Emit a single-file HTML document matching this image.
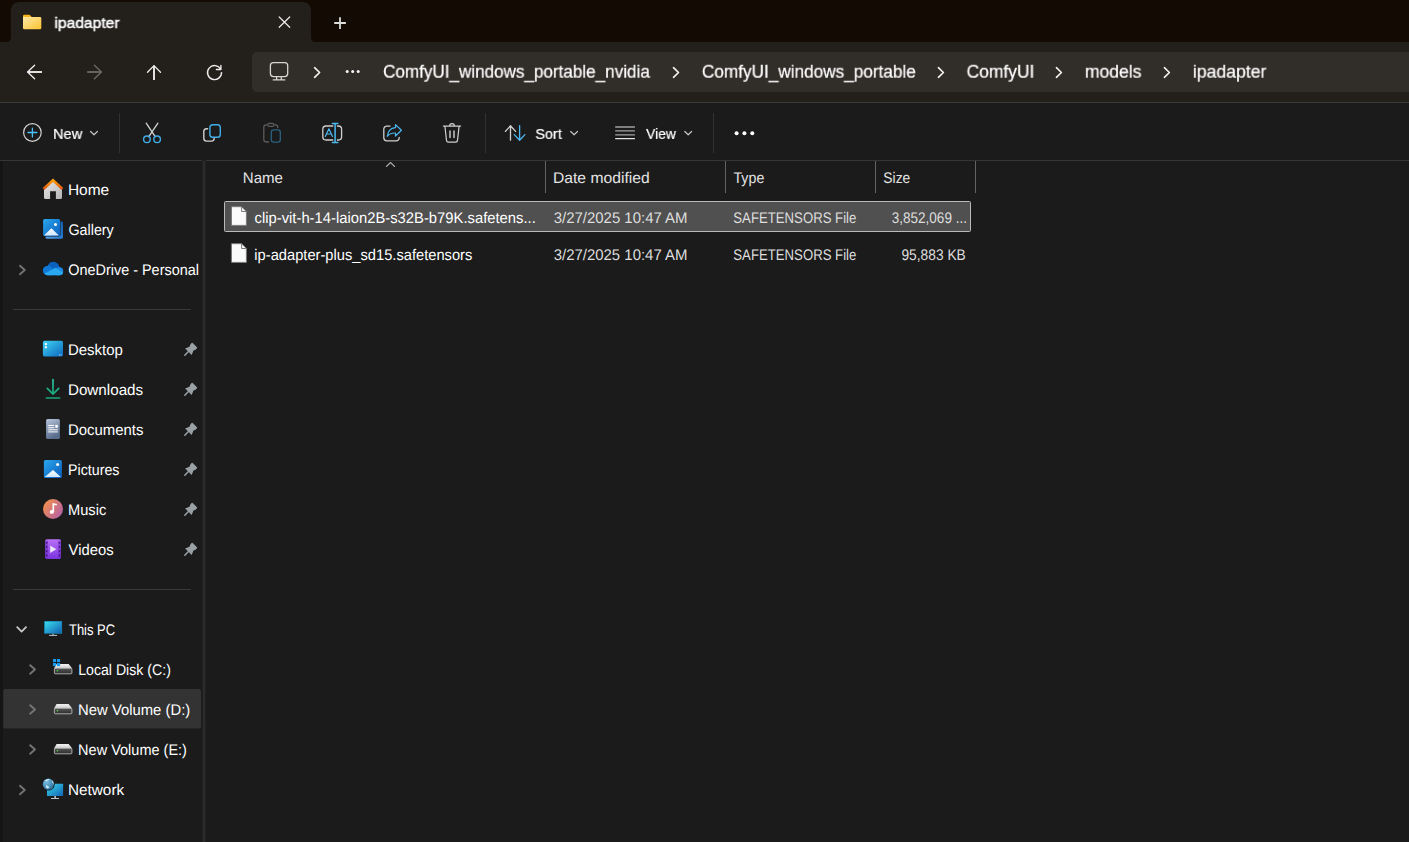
<!DOCTYPE html>
<html>
<head>
<meta charset="utf-8">
<title>ipadapter</title>
<style>
*{box-sizing:border-box;margin:0;padding:0}
html,body{width:1409px;height:842px;overflow:hidden;background:#1b1b1b}
body{position:relative;font-family:"Liberation Sans",sans-serif;color:#fff}
.abs{position:absolute}
.t{position:absolute;white-space:nowrap;line-height:1;transform-origin:0 0}
svg{position:absolute;overflow:visible}
#titlebar{left:0;top:0;width:1409px;height:42px;background:#120a03}
#navbar{left:0;top:42px;width:1409px;height:60px;background:#23201c}
#addr{left:252px;top:52px;width:1170px;height:40px;background:#312d29;border-radius:5px}
#navline{left:0;top:102px;width:1409px;height:1px;background:#3a3938}
#toolbar{left:0;top:103px;width:1409px;height:57px;background:#1b1b1b}
#toolline{left:0;top:160px;width:1409px;height:1px;background:#363636}
#leftedge{left:0;top:161px;width:3px;height:681px;background:#151515}
#sideline{left:203px;top:161px;width:2px;height:681px;background:#2b2b2b;box-shadow:0 0 0 1px #202020}
.vsep{position:absolute;width:1px;background:#313131;top:113px;height:40px}
.csep{position:absolute;width:1px;background:#636363;top:161px;height:32px}
.hsep{position:absolute;height:1px;background:#3a3a3a;left:13px;width:178px}
#selrow{left:224px;top:201px;width:747px;height:31px;background:#505050;border:1px solid #bababa;border-radius:1.5px}
#sidesel{left:4px;top:690px;width:197px;height:38px;background:#323232;border-radius:3px}
</style>
</head>
<body>
<div id="titlebar" class="abs"></div>
<div id="navbar" class="abs"></div>
<svg id="tabshape" style="left:0;top:0" width="330" height="42" viewBox="0 0 330 42"><path d="M0 42 H6.400 C8.900 42 10.900 40 10.900 37.500 V10 C10.900 5.600 14.500 2 18.900 2 H303 C307.400 2 311 5.600 311 10 V37.500 C311 40 313 42 315.500 42 H330 Z" fill="#23201c"/></svg>
<div id="addr" class="abs"></div>
<div id="navline" class="abs"></div>
<div id="toolbar" class="abs"></div>
<div id="toolline" class="abs"></div>
<div id="leftedge" class="abs"></div>
<div id="sideline" class="abs"></div>
<div class="vsep" style="left:119px"></div>
<div class="vsep" style="left:485px"></div>
<div class="vsep" style="left:713px"></div>
<div class="csep" style="left:545px"></div>
<div class="csep" style="left:725px"></div>
<div class="csep" style="left:875px"></div>
<div class="csep" style="left:975px"></div>
<div class="hsep" style="top:309px"></div>
<div class="hsep" style="top:589px"></div>
<div id="selrow" class="abs"></div>
<svg style="left:0;top:680px" width="205" height="60" viewBox="0 680 205 60"><rect x="3.200" y="689.100" width="197.800" height="39.500" rx="2" fill="#333333"/></svg>
<!-- ===== title bar icons ===== -->
<svg style="left:0;top:0" width="1409" height="160" viewBox="0 0 1409 160" fill="none" stroke-linecap="round" stroke-linejoin="round">
<defs>
<linearGradient id="fold1" x1="0" y1="0" x2="1" y2="1"><stop offset="0" stop-color="#ffe9a6"/><stop offset="1" stop-color="#fcc230"/></linearGradient>
</defs>
<!-- folder in tab -->
<path d="M23 16.200 a1.400 1.400 0 0 1 1.400 -1.400 h5.200 l2.400 2.400 h-9 z" fill="#f7b51c"/>
<path d="M23 17 h17 a1.300 1.300 0 0 1 1.300 1.300 v9.700 a1.300 1.300 0 0 1 -1.300 1.300 h-15.700 a1.300 1.300 0 0 1 -1.300 -1.300 z" fill="url(#fold1)"/>
<!-- tab close -->
<path d="M279.200 17 L289.700 27.300 M289.700 17 L279.200 27.300" stroke="#ececec" stroke-width="1.200"/>
<!-- new tab plus -->
<path d="M334.200 23 H345.900 M340 17.200 V28.900" stroke="#dcdcdc" stroke-width="1.800" stroke-linecap="butt"/>
<!-- back -->
<path d="M27.600 72 H42" stroke="#e2e2e2" stroke-width="2" stroke-linecap="butt"/>
<path d="M34.600 65.200 L27.600 72 L34.600 78.800" stroke="#f0f0f0" stroke-width="1.300"/>
<!-- forward (disabled) -->
<path d="M87.200 72 H101.400" stroke="#66635f" stroke-width="2" stroke-linecap="butt"/>
<path d="M94.400 65.200 L101.400 72 L94.400 78.800" stroke="#6e6b67" stroke-width="1.300"/>
<!-- up -->
<path d="M154 65.800 V80" stroke="#e2e2e2" stroke-width="2" stroke-linecap="butt"/>
<path d="M147.500 72.300 L154 65.600 L160.500 72.300" stroke="#f0f0f0" stroke-width="1.300"/>
<!-- refresh -->
<path d="M221.500 72.100 A7 7 0 1 1 220.700 69.300" stroke="#ececec" stroke-width="1.400" stroke-linecap="butt"/>
<path d="M220.900 65.400 V69.500 H216.400" stroke="#ececec" stroke-width="1.400"/>
<!-- monitor -->
<rect x="270.400" y="62.600" width="17.300" height="14" rx="3" stroke="#d8d5d2" stroke-width="1.300"/>
<path d="M276.600 77 V79.800 M281.300 77 V79.800 M273.200 79.900 H284.800" stroke="#d8d5d2" stroke-width="1.300"/>
<!-- breadcrumb chevrons -->
<g stroke="#f4f4f4" stroke-width="1.650">
<path d="M314.600 67.700 L319.600 72.500 L314.600 77.300"/>
<path d="M673.500 67.700 L678.500 72.500 L673.500 77.300"/>
<path d="M938.400 67.700 L943.400 72.500 L938.400 77.300"/>
<path d="M1056.400 67.700 L1061.400 72.500 L1056.400 77.300"/>
<path d="M1164.400 67.700 L1169.400 72.500 L1164.400 77.300"/>
</g>
<!-- breadcrumb dots -->
<g fill="#f6f6f6"><circle cx="347.200" cy="71.500" r="1.500"/><circle cx="352.700" cy="71.500" r="1.500"/><circle cx="358.200" cy="71.500" r="1.500"/></g>
<!-- ===== toolbar icons ===== -->
<!-- new -->
<circle cx="32.400" cy="132.500" r="8.800" stroke="#d2d2d2" stroke-width="1.200"/>
<path d="M28 132.500 H36.800 M32.400 128.100 V136.900" stroke="#4cc2ff" stroke-width="1.300"/>
<!-- dropdown chevrons -->
<g stroke="#c4c4c4" stroke-width="1.200">
<path d="M90.600 131.500 L94 134.800 L97.400 131.500"/>
<path d="M570.700 131.500 L574.100 134.800 L577.500 131.500"/>
<path d="M684.800 131.500 L688.200 134.800 L691.600 131.500"/>
</g>
<!-- cut -->
<path d="M146.200 123.200 L155.200 136.600 M157.900 123.200 L148.800 136.600" stroke="#d4d4d4" stroke-width="1.300"/>
<circle cx="146.900" cy="139.300" r="3.300" stroke="#41aee8" stroke-width="1.400"/>
<circle cx="157.100" cy="139.300" r="3.300" stroke="#41aee8" stroke-width="1.400"/>
<!-- copy -->
<path d="M207.600 128.800 H206.600 a2.800 2.800 0 0 0 -2.800 2.800 V138.300 a2.800 2.800 0 0 0 2.800 2.800 H211.400 a2.800 2.800 0 0 0 2.800 -2.600" stroke="#cfcfcf" stroke-width="1.400"/>
<rect x="209.900" y="124.800" width="10.400" height="12.500" rx="2.800" stroke="#41aee8" stroke-width="1.400"/>
<!-- paste (disabled) -->
<path d="M267.200 124.800 H266.200 a2.400 2.400 0 0 0 -2.400 2.400 V139.600 a2.400 2.400 0 0 0 2.400 2.400 H268.600 M274.400 124.800 H275.400 a2.400 2.400 0 0 1 2.400 2.400 V127.600" stroke="#5c5c5c" stroke-width="1.300"/>
<rect x="267.700" y="123.400" width="6.300" height="2.900" rx="1.450" stroke="#5c5c5c" stroke-width="1.200"/>
<rect x="271.300" y="129.800" width="9" height="12.400" rx="2.400" stroke="#29617f" stroke-width="1.300"/>
<!-- rename -->
<path d="M332.800 126 H326 a3.200 3.200 0 0 0 -3.200 3.200 V136.800 a3.200 3.200 0 0 0 3.200 3.200 H332.800 M337.400 126 H338.400 a3.200 3.200 0 0 1 3.200 3.200 V136.800 a3.200 3.200 0 0 1 -3.200 3.200 H337.400" stroke="#d0d0d0" stroke-width="1.300"/>
<path d="M332.400 123.500 H337.800 M332.400 142.400 H337.800 M335.100 123.500 V142.400" stroke="#4cb8f0" stroke-width="1.500"/>
<path d="M325.300 136.400 L328.900 128.800 L332.500 136.400 M326.600 134 H331.200" stroke="#4cb8f0" stroke-width="1.200"/>
<!-- share -->
<path d="M390 126.100 H386.800 a3 3 0 0 0 -3 3 V137.800 a3 3 0 0 0 3 3 H396.200 a3 3 0 0 0 3 -3 V137.300" stroke="#cfcfcf" stroke-width="1.300"/>
<path d="M395.500 124.600 L401.400 130.300 L395.500 136 V133 C391.500 132.800 389 134 387.300 136.300 C387.800 131.800 390.500 128.200 395.500 127.700 Z" stroke="#4cb8f0" stroke-width="1.200"/>
<!-- delete -->
<path d="M443.400 126.100 H460.600 M449.600 126 a2.400 2.400 0 0 1 4.800 0" stroke="#d0d0d0" stroke-width="1.200"/>
<path d="M444.900 126.300 L446.500 140.400 a1.900 1.900 0 0 0 1.900 1.700 H455.600 a1.900 1.900 0 0 0 1.900 -1.700 L459.100 126.300" stroke="#d0d0d0" stroke-width="1.200"/>
<path d="M450 131 V137.600 M454 131 V137.600" stroke="#c6c6c6" stroke-width="1.500"/>
<!-- sort -->
<path d="M510.500 125.800 V140.200 M505.400 131.400 L510.500 125.800 L515.600 131.400" stroke="#d2d2d2" stroke-width="1.300"/>
<path d="M519.600 125.600 V140.200 M514.300 134.600 L519.600 140.300 L524.900 134.600" stroke="#4cb8f0" stroke-width="1.300"/>
<!-- view -->
<path d="M615.200 127 H634.900 M615.200 138.700 H634.900" stroke="#e4e4e4" stroke-width="1.200" stroke-linecap="butt"/>
<path d="M615.200 130.900 H634.900 M615.200 134.800 H634.900" stroke="#a2a2a2" stroke-width="1.300" stroke-linecap="butt"/>
<!-- more -->
<g fill="#ffffff"><circle cx="736.600" cy="133.200" r="2"/><circle cx="744.400" cy="133.200" r="2"/><circle cx="752.300" cy="133.200" r="2"/></g>
</svg>
<!-- ===== sidebar icons ===== -->
<svg style="left:0;top:160px" width="205" height="682" viewBox="0 160 205 682" fill="none" stroke-linecap="round" stroke-linejoin="round">
<defs>
<linearGradient id="gRoof" x1="0" y1="0" x2="0" y2="1"><stop offset="0" stop-color="#ffa10d"/><stop offset="1" stop-color="#e0560c"/></linearGradient>
<linearGradient id="gHouse" x1="0" y1="0" x2="1" y2="1"><stop offset="0" stop-color="#e8e8e8"/><stop offset="1" stop-color="#b4b4b4"/></linearGradient>
<linearGradient id="gPic" x1="0" y1="0" x2="1" y2="1"><stop offset="0" stop-color="#2aa7ee"/><stop offset="1" stop-color="#0b5cba"/></linearGradient>
<linearGradient id="gBack" x1="1" y1="0" x2="0" y2="1"><stop offset="0" stop-color="#1265bf"/><stop offset="0.550" stop-color="#2a80d6"/><stop offset="1" stop-color="#5aa6ec"/></linearGradient>
<linearGradient id="gMnt" x1="0" y1="0" x2="0" y2="1"><stop offset="0" stop-color="#ffffff"/><stop offset="1" stop-color="#cfe6fb"/></linearGradient>
<linearGradient id="gDesk" x1="0" y1="0" x2="1" y2="1"><stop offset="0" stop-color="#40d4f2"/><stop offset="1" stop-color="#0d68c0"/></linearGradient>
<linearGradient id="gDl" x1="0" y1="0" x2="0" y2="1"><stop offset="0" stop-color="#28c4a4"/><stop offset="1" stop-color="#1aa67a"/></linearGradient>
<linearGradient id="gDoc" x1="0" y1="0" x2="0.400" y2="1"><stop offset="0" stop-color="#b8c6dc"/><stop offset="1" stop-color="#586c8c"/></linearGradient>
<linearGradient id="gMus" x1="0" y1="0.200" x2="1" y2="0.900"><stop offset="0" stop-color="#f4914a"/><stop offset="1" stop-color="#b05cae"/></linearGradient>
<linearGradient id="gVid" x1="0" y1="0" x2="0" y2="1"><stop offset="0" stop-color="#b870f6"/><stop offset="1" stop-color="#7c34de"/></linearGradient>
<linearGradient id="gPC" x1="0" y1="0" x2="1" y2="1"><stop offset="0" stop-color="#38dcec"/><stop offset="1" stop-color="#1262b4"/></linearGradient>
<linearGradient id="gDrv" x1="0" y1="0" x2="0" y2="1"><stop offset="0" stop-color="#565656"/><stop offset="1" stop-color="#2c2c2c"/></linearGradient>
<linearGradient id="gDrvTop" x1="0" y1="0" x2="0" y2="1"><stop offset="0" stop-color="#f2f2f2"/><stop offset="1" stop-color="#d0d0d0"/></linearGradient>
<radialGradient id="gGlobe" cx="0.350" cy="0.300" r="0.800"><stop offset="0" stop-color="#7cc0e2"/><stop offset="1" stop-color="#236a98"/></radialGradient>
<g id="pin">
<path d="M190.300 344.500 L191.300 343.300 a1.200 1.200 0 0 1 1.700 -0.100 L196.700 346.900 a1.200 1.200 0 0 1 0 1.700 L195.600 349.700 L193.500 350.600 L191.700 354.900 L185.100 348.400 L189.500 346.700 Z" fill="#99a0a5"/>
<path d="M188.200 351.800 L184.800 355.200" stroke="#99a0a5" stroke-width="1.500"/>
</g>
<g id="drive">
<path d="M56.600 704 H68.600 L72.100 708.200 H54.100 Z" fill="url(#gDrvTop)"/>
<rect x="54.400" y="708.300" width="17.500" height="5.500" rx="0.800" fill="url(#gDrv)" stroke="#b9b9b9" stroke-width="0.900"/>
<circle cx="57.400" cy="710.800" r="0.800" fill="#43e043"/>
</g>
</defs>
<!-- home -->
<path d="M44 189 L53 181.200 L62 189 V197.600 a1.500 1.500 0 0 1 -1.500 1.500 H55.900 V191.300 H50.100 V199.100 H45.500 a1.500 1.500 0 0 1 -1.500 -1.500 Z" fill="url(#gHouse)"/>
<path d="M43.500 189 L53 180.300 L62.500 189" stroke="url(#gRoof)" stroke-width="2.500" stroke-linecap="butt" stroke-linejoin="miter"/>
<!-- gallery -->
<rect x="45.600" y="221.600" width="17.300" height="17.200" rx="1.600" fill="url(#gBack)"/>
<rect x="42.700" y="218.700" width="17.900" height="17.900" rx="1.800" fill="#1b1b1b"/>
<rect x="43.100" y="219.100" width="17" height="17" rx="1.500" fill="url(#gPic)"/>
<path d="M43.900 235.400 L51.400 228.200 L58.900 235.400 Z" fill="url(#gMnt)"/>
<circle cx="55.500" cy="224.500" r="1.500" fill="#fff"/>
<!-- onedrive -->
<clipPath id="cloudclip"><circle cx="47.500" cy="270.600" r="4.600"/><circle cx="53.400" cy="267.600" r="5.900"/><circle cx="59.200" cy="271.200" r="4"/><rect x="47.500" y="270" width="11.700" height="5.200"/></clipPath>
<g clip-path="url(#cloudclip)">
<rect x="42" y="260" width="22" height="16" fill="#0a62be"/>
<circle cx="46.800" cy="271.200" r="6.300" fill="#0f79d8"/>
<circle cx="59.600" cy="271.700" r="4.800" fill="#1a8ae2"/>
<path d="M42 275 L55.200 267.700 L64 273 V277 H42 Z" fill="#2ba7f0"/>
</g>
<!-- desktop -->
<rect x="42.900" y="340.800" width="20.100" height="15.600" rx="1.600" fill="url(#gDesk)"/>
<rect x="44.900" y="343.100" width="2" height="2" fill="#fff"/><rect x="44.900" y="346.200" width="2" height="2" fill="#fff"/>
<rect x="58.800" y="354.500" width="1" height="1" fill="#cfeaff"/><rect x="60.600" y="354.500" width="1" height="1" fill="#cfeaff"/>
<!-- downloads -->
<path d="M53 379.600 V394 M47.300 388.400 L53 394.200 L58.700 388.400" stroke="url(#gDl)" stroke-width="1.700"/>
<path d="M46.400 398 H59.600" stroke="#1aa87c" stroke-width="1.700"/>
<!-- documents -->
<rect x="46.100" y="419.100" width="13.800" height="19.800" rx="1.500" fill="url(#gDoc)"/>
<path d="M48.300 425.500 H54.200 M48.300 427.700 H54.200 M48.300 429.800 H57.800 M48.300 431.900 H57.800" stroke="#fff" stroke-width="1" stroke-linecap="butt"/>
<rect x="55.300" y="424.900" width="2.500" height="2.900" fill="#fff"/>
<!-- pictures -->
<rect x="43.900" y="460" width="18" height="18" rx="1.600" fill="url(#gPic)"/>
<path d="M44.700 477 L53 470 L60.900 477 Z" fill="url(#gMnt)"/>
<circle cx="57.600" cy="464.500" r="1.500" fill="#fff"/>
<!-- music -->
<circle cx="53" cy="509" r="10" fill="url(#gMus)"/>
<ellipse cx="51.800" cy="511.900" rx="2.100" ry="1.900" fill="#fff"/>
<path d="M53.300 512 V504 L56.800 504.800" stroke="#fff" stroke-width="1.600" stroke-linecap="butt" stroke-linejoin="miter"/>
<!-- videos -->
<rect x="45.200" y="539.200" width="15.700" height="19.700" rx="1.600" fill="url(#gVid)"/>
<rect x="45.200" y="540.600" width="2.800" height="17" fill="#6c2ac2" opacity="0.550"/><rect x="58.100" y="540.600" width="2.800" height="17" fill="#6c2ac2" opacity="0.550"/>
<g fill="#3c1680"><rect x="45.900" y="542" width="1.400" height="1.600"/><rect x="45.900" y="546.200" width="1.400" height="1.600"/><rect x="45.900" y="550.400" width="1.400" height="1.600"/><rect x="45.900" y="554.600" width="1.400" height="1.600"/><rect x="58.800" y="542" width="1.400" height="1.600"/><rect x="58.800" y="546.200" width="1.400" height="1.600"/><rect x="58.800" y="550.400" width="1.400" height="1.600"/><rect x="58.800" y="554.600" width="1.400" height="1.600"/></g>
<path d="M50.200 545.500 V553 L56.300 549.200 Z" fill="#ece2fb"/>
<!-- this pc -->
<rect x="44.100" y="621" width="18" height="12.800" rx="0.600" fill="#1880b0"/>
<rect x="44.900" y="621.700" width="16.400" height="11.300" fill="url(#gPC)"/>
<rect x="52.400" y="633.800" width="1.400" height="1.400" fill="#9fb0bc"/><rect x="49.100" y="634.900" width="8" height="1" fill="#b8c4cc"/>
<!-- local disk c -->
<use href="#drive" y="-40"/>
<g fill="#1b9af2"><rect x="53" y="659" width="3.100" height="3.100"/><rect x="57" y="659" width="3.100" height="3.100"/><rect x="53" y="663" width="3.100" height="3.100"/><rect x="57" y="663" width="3.100" height="3.100"/></g>
<use href="#drive" y="0"/>
<use href="#drive" y="40"/>
<!-- network -->
<rect x="47" y="783.800" width="16.100" height="12.100" rx="0.500" fill="url(#gPC)"/>
<rect x="54.300" y="795.900" width="1.700" height="2.200" fill="#aab4bc"/><rect x="51" y="798" width="8" height="1" fill="#bcc4ca"/>
<circle cx="48.400" cy="784.200" r="6.300" fill="#1b1b1b"/>
<circle cx="48.400" cy="784.200" r="5.600" fill="url(#gGlobe)"/>
<path d="M44.500 781 C45.500 779.500 48 778.700 50 779 C49 780.200 46.500 781.500 44.500 781 Z M46 785 L49.500 787 L47.800 788.800 L45.800 787.200 Z M51.800 780.200 C53.200 781 53.800 782.600 53.600 784 C52.600 783.400 52 781.600 51.800 780.200 Z" fill="#d8eef8" opacity="0.900"/>
<!-- pins -->
<use href="#pin" y="0"/><use href="#pin" y="40"/><use href="#pin" y="80"/><use href="#pin" y="120"/><use href="#pin" y="160"/><use href="#pin" y="200"/>
<!-- chevrons -->
<g stroke="#747474" stroke-width="1.900" stroke-linecap="butt">
<path d="M19.400 265.300 L24.800 270 L19.400 274.700"/>
<path d="M29.600 664.800 L35 669.500 L29.600 674.200"/>
<path d="M29.600 704.800 L35 709.500 L29.600 714.200"/>
<path d="M29.600 744.800 L35 749.500 L29.600 754.200"/>
<path d="M19.400 785.300 L24.800 790 L19.400 794.700"/>
</g>
<path d="M16.700 626.600 L21.600 631.700 L26.500 626.600" stroke="#c8c8c8" stroke-width="1.700" stroke-linecap="butt"/>
</svg>
<!-- ===== content icons ===== -->
<svg style="left:205px;top:160px" width="800" height="120" viewBox="205 160 800 120" fill="none" stroke-linecap="round" stroke-linejoin="round">
<defs>
<g id="fileico">
<path d="M231.800 206.700 H241.600 L246.400 211.500 V225.400 H231.800 Z" fill="#fafafa" stroke="#7a7a7a" stroke-width="1"/>
<path d="M241.600 206.700 V211.500 H246.400" fill="none" stroke="#7a7a7a" stroke-width="1"/>
</g>
</defs>
<use href="#fileico" y="0"/>
<use href="#fileico" y="37"/>
<path d="M386.400 166.500 L390.500 162.500 L394.600 166.500" stroke="#ababab" stroke-width="1.100"/>
</svg>

<div class="t" style="left:54px;top:14px;font-size:15.4px;color:#ffffff;-webkit-text-stroke:0.45px currentColor;will-change:transform;transform:translate(0.39px,0.96px) scaleX(1.0173) skewX(0.05deg);">ipadapter</div>
<div class="t" style="left:383px;top:62px;font-size:18.0px;color:#ffffff;will-change:transform;-webkit-text-stroke:0.22px currentColor;transform:translate(0.09px,0.76px) scaleX(0.9487) skewX(0.05deg);">ComfyUI_windows_portable_nvidia</div>
<div class="t" style="left:701px;top:62px;font-size:18.0px;color:#ffffff;will-change:transform;-webkit-text-stroke:0.22px currentColor;transform:translate(0.93px,0.76px) scaleX(0.9549) skewX(0.05deg);">ComfyUI_windows_portable</div>
<div class="t" style="left:966px;top:62px;font-size:18.0px;color:#ffffff;will-change:transform;-webkit-text-stroke:0.22px currentColor;transform:translate(0.62px,0.76px) scaleX(0.9677) skewX(0.05deg);">ComfyUI</div>
<div class="t" style="left:1084px;top:62px;font-size:18.0px;color:#ffffff;will-change:transform;-webkit-text-stroke:0.22px currentColor;transform:translate(0.88px,0.76px) scaleX(0.9752) skewX(0.05deg);">models</div>
<div class="t" style="left:1192px;top:62px;font-size:18.0px;color:#ffffff;will-change:transform;-webkit-text-stroke:0.22px currentColor;transform:translate(0.87px,0.76px) scaleX(0.9804) skewX(0.05deg);">ipadapter</div>
<div class="t" style="left:53px;top:125px;font-size:15.4px;color:#ffffff;will-change:transform;-webkit-text-stroke:0.22px currentColor;transform:translate(0.05px,0.96px) scaleX(0.9484) skewX(0.05deg);">New</div>
<div class="t" style="left:535px;top:125px;font-size:15.4px;color:#ffffff;will-change:transform;-webkit-text-stroke:0.22px currentColor;transform:translate(0.39px,0.96px) scaleX(0.9352) skewX(0.05deg);">Sort</div>
<div class="t" style="left:646px;top:125px;font-size:15.4px;color:#ffffff;will-change:transform;-webkit-text-stroke:0.22px currentColor;transform:translate(0.14px,0.96px) scaleX(0.8955) skewX(0.05deg);">View</div>
<div class="t" style="left:67px;top:181px;font-size:15.4px;color:#ffffff;transform:translate(0.89px,0.96px) scaleX(1.0064) skewX(0.05deg);">Home</div>
<div class="t" style="left:68px;top:221px;font-size:15.4px;color:#ffffff;transform:translate(0.45px,0.96px) scaleX(0.9292) skewX(0.05deg);">Gallery</div>
<div class="t" style="left:68px;top:261px;font-size:15.4px;color:#ffffff;transform:translate(0.24px,0.96px) scaleX(0.9372) skewX(0.05deg);">OneDrive - Personal</div>
<div class="t" style="left:67px;top:341px;font-size:15.4px;color:#ffffff;transform:translate(0.93px,0.96px) scaleX(0.9744) skewX(0.05deg);">Desktop</div>
<div class="t" style="left:67px;top:381px;font-size:15.4px;color:#ffffff;transform:translate(0.91px,0.96px) scaleX(0.9879) skewX(0.05deg);">Downloads</div>
<div class="t" style="left:67px;top:421px;font-size:15.4px;color:#ffffff;transform:translate(0.94px,0.96px) scaleX(0.9685) skewX(0.05deg);">Documents</div>
<div class="t" style="left:67px;top:461px;font-size:15.4px;color:#ffffff;transform:translate(0.99px,0.96px) scaleX(0.9250) skewX(0.05deg);">Pictures</div>
<div class="t" style="left:67px;top:501px;font-size:15.4px;color:#ffffff;transform:translate(0.95px,0.96px) scaleX(0.9523) skewX(0.05deg);">Music</div>
<div class="t" style="left:68px;top:541px;font-size:15.4px;color:#ffffff;transform:translate(0.50px,0.96px) scaleX(0.9633) skewX(0.05deg);">Videos</div>
<div class="t" style="left:68px;top:621px;font-size:15.4px;color:#ffffff;transform:translate(0.96px,0.96px) scaleX(0.8438) skewX(0.05deg);">This PC</div>
<div class="t" style="left:78px;top:661px;font-size:15.4px;color:#ffffff;transform:translate(0.14px,0.96px) scaleX(0.9187) skewX(0.05deg);">Local Disk (C:)</div>
<div class="t" style="left:78px;top:701px;font-size:15.4px;color:#ffffff;transform:translate(0.09px,0.96px) scaleX(0.9637) skewX(0.05deg);">New Volume (D:)</div>
<div class="t" style="left:78px;top:741px;font-size:15.4px;color:#ffffff;transform:translate(0.11px,0.96px) scaleX(0.9423) skewX(0.05deg);">New Volume (E:)</div>
<div class="t" style="left:67px;top:781px;font-size:15.4px;color:#ffffff;transform:translate(0.90px,0.96px) scaleX(0.9964) skewX(0.05deg);">Network</div>
<div class="t" style="left:242px;top:169px;font-size:15.4px;color:#e4e4e4;transform:translate(0.78px,0.96px) scaleX(0.9796) skewX(0.05deg);">Name</div>
<div class="t" style="left:552px;top:169px;font-size:15.4px;color:#e4e4e4;transform:translate(0.88px,0.96px) scaleX(1.0199) skewX(0.05deg);">Date modified</div>
<div class="t" style="left:733px;top:169px;font-size:15.4px;color:#e4e4e4;transform:translate(0.47px,0.96px) scaleX(0.9231) skewX(0.05deg);">Type</div>
<div class="t" style="left:883px;top:169px;font-size:15.4px;color:#e4e4e4;transform:translate(0.33px,0.96px) scaleX(0.8983) skewX(0.05deg);">Size</div>
<div class="t" style="left:254px;top:210px;font-size:15.4px;color:#ffffff;transform:translate(0.52px,0.16px) scaleX(0.9613) skewX(0.05deg);">clip-vit-h-14-laion2B-s32B-b79K.safetens...</div>
<div class="t" style="left:553px;top:210px;font-size:15.4px;color:#dedede;transform:translate(0.67px,0.16px) scaleX(0.9714) skewX(0.05deg);">3/27/2025 10:47 AM</div>
<div class="t" style="left:733px;top:210px;font-size:15.4px;color:#dedede;transform:translate(0.30px,0.16px) scaleX(0.8564) skewX(0.05deg);">SAFETENSORS File</div>
<div class="t" style="left:891px;top:210px;font-size:15.4px;color:#dedede;transform:translate(0.62px,0.16px) scaleX(0.8806) skewX(0.05deg);">3,852,069 ...</div>
<div class="t" style="left:254px;top:246px;font-size:15.4px;color:#ffffff;transform:translate(0.35px,0.96px) scaleX(0.9540) skewX(0.05deg);">ip-adapter-plus_sd15.safetensors</div>
<div class="t" style="left:553px;top:246px;font-size:15.4px;color:#dedede;transform:translate(0.67px,0.96px) scaleX(0.9713) skewX(0.05deg);">3/27/2025 10:47 AM</div>
<div class="t" style="left:733px;top:246px;font-size:15.4px;color:#dedede;transform:translate(0.30px,0.96px) scaleX(0.8564) skewX(0.05deg);">SAFETENSORS File</div>
<div class="t" style="left:901px;top:246px;font-size:15.4px;color:#dedede;transform:translate(0.41px,0.96px) scaleX(0.8958) skewX(0.05deg);">95,883 KB</div>
</body>
</html>
